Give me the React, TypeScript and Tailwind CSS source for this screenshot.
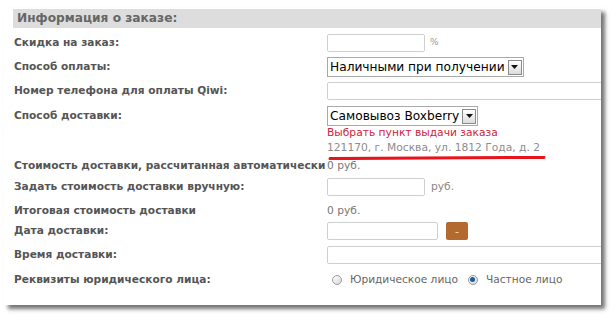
import React from 'react';

const font = "font-['DejaVu_Sans',Verdana,sans-serif]";

const Label = ({ children }: { children: React.ReactNode }) => (
  <div className="w-[313px] shrink-0 whitespace-nowrap text-[10.6px] font-bold text-[#555]">{children}</div>
);

const Input = ({ w }: { w: string }) => (
  <div className={`h-[18px] ${w} shrink-0 rounded-[2px] border border-[#cfcfcf] bg-white`} />
);

const Select = ({ label }: { label: string }) => (
  <div className="flex h-[20px] items-center gap-[3px] border border-[#a9a9a9] bg-white pl-[2px] pr-[1px]">
    <span className="whitespace-nowrap text-[12.2px] leading-none text-black">{label}</span>
    <span className="flex h-[15px] w-[14px] items-center justify-center border border-[#8a8a8a] bg-gradient-to-b from-white to-[#dcdcdc]">
      <svg width="7" height="4" viewBox="0 0 7 4">
        <path d="M0 0 H7 L3.5 4 Z" fill="#111" />
      </svg>
    </span>
  </div>
);

const Radio = ({ checked }: { checked?: boolean }) => (
  <span className="flex h-[10px] w-[10px] items-center justify-center rounded-full border border-[#9a9a9a] bg-gradient-to-br from-white to-[#d8d8d8]">
    {checked && <span className="h-[5px] w-[5px] rounded-full bg-[#1d5d94]" />}
  </span>
);

const Row = ({ h, label, children }: { h: string; label: string; children?: React.ReactNode }) => (
  <div className={`flex ${h} items-center`}>
    <Label>{label}</Label>
    {children}
  </div>
);

export default function App() {
  return (
    <div className={`h-[321px] w-[616px] overflow-hidden bg-white pl-[4px] pt-[8px] ${font}`}>
      <div className="h-[297px] w-[597px] overflow-hidden bg-white pt-[1px] shadow-[4px_4px_4px_rgba(0,0,0,0.55)]">
        <div className="ml-[9px] flex h-[19px] items-center bg-[#dddddd] pl-[4px] text-[12.2px] font-bold text-[#666]">
          Информация о заказе:
        </div>

        <div className="mt-[3px] pl-[10px]">
          <Row h="h-[24px]" label="Скидка на заказ:">
            <Input w="w-[98px]" />
            <span className="ml-[5px] text-[9px] text-[#999]">%</span>
          </Row>
          <Row h="h-[24px]" label="Способ оплаты:">
            <Select label="Наличными при получении" />
          </Row>
          <Row h="h-[24px]" label="Номер телефона для оплаты Qiwi:">
            <Input w="w-[300px]" />
          </Row>

          <div className="flex">
            <div className="h-[24px] leading-[24px]">
              <Label>Способ доставки:</Label>
            </div>
            <div className="flex flex-col items-start pt-[3px]">
              <Select label="Самовывоз Boxberry" />
              <div className="h-[14px] text-[10.7px] leading-[14px] text-[#d3223c]">Выбрать пункт выдачи заказа</div>
              <div className="h-[16px] text-[10.7px] leading-[16px] text-[#8c8c8c]">121170, г. Москва, ул. 1812 Года, д. 2</div>
              <svg width="222" height="4" viewBox="0 0 222 4" className="block">
                <path d="M3 2.6 L217 1.4" stroke="#e8141c" strokeWidth="3" strokeLinecap="round" />
              </svg>
            </div>
          </div>

          <div className="flex h-[12px] items-center">
            <Label>Стоимость доставки, рассчитанная автоматически</Label>
            <span className="text-[10.7px] text-[#777]">0 руб.</span>
          </div>
          <Row h="h-[30px]" label="Задать стоимость доставки вручную:">
            <Input w="w-[98px]" />
            <span className="ml-[6px] text-[10.7px] text-[#888]">руб.</span>
          </Row>
          <Row h="h-[18px]" label="Итоговая стоимость доставки">
            <span className="text-[10.7px] text-[#777]">0 руб.</span>
          </Row>
          <Row h="h-[22px]" label="Дата доставки:">
            <Input w="w-[111px]" />
            <button className="ml-[8px] flex h-[18px] w-[22px] items-center justify-center rounded-[2px] bg-[#b4692f] text-[11px] leading-none text-[#f3dcc8]">
              -
            </button>
          </Row>
          <Row h="h-[26px]" label="Время доставки:">
            <Input w="w-[300px]" />
          </Row>
          <Row h="h-[24px]" label="Реквизиты юридического лица:">
            <div className="ml-[5px] flex items-center text-[10.6px] text-[#666]">
              <Radio />
              <span className="ml-[8px]">Юридическое лицо</span>
              <span className="ml-[10px]"><Radio checked /></span>
              <span className="ml-[8px]">Частное лицо</span>
            </div>
          </Row>
        </div>
      </div>
    </div>
  );
}
